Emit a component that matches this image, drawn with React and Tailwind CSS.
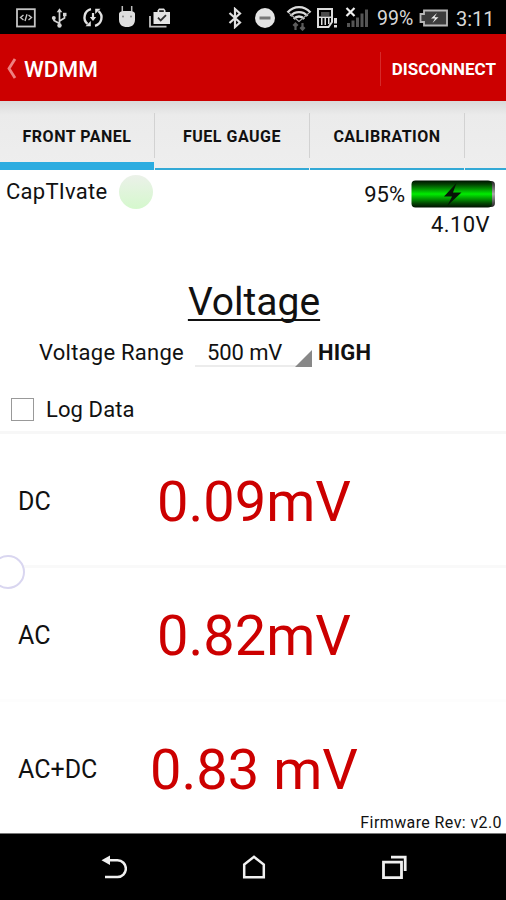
const readings = [
  { label: "DC", value: "0.09mV", line: "border-[#f7f7f7]" },
  { label: "AC", value: "0.82mV", line: "border-[#f9f9f9]" },
  { label: "AC+DC", value: "0.83 mV", line: "border-[#fdfdfd]" },
];

const tabs = ["FRONT PANEL", "FUEL GAUGE", "CALIBRATION"];

// Android status bar, notifications on the left and system icons on the right
function StatusBar() {
  return (
    <div className="flex h-[34px] items-center bg-black pt-px text-[#d8d8d8]">
      <svg className="ml-4" width="20" height="20" viewBox="0 0 20 20" fill="none" stroke="#c4c4c4">
        <rect x="1" y="1.2" width="17.8" height="17.3" strokeWidth="1.8" />
        <path d="M7.5 7 4.5 9.5 7.5 12M12.5 7l3 2.5-3 2.5M11 6.2 9 13" strokeWidth="1.4" />
      </svg>
      <svg className="ml-[15px]" width="17" height="20" viewBox="0 0 17 20" fill="none" stroke="#d4d4d4" strokeWidth="1.7">
        <path d="M8.5 3v14M8.5 15.5 3 12.5v-2M8.5 13l5-3V7" />
        <path d="M5.7 4.2 8.5.3l2.8 3.9z" fill="#d4d4d4" stroke="none" />
        <circle cx="2.8" cy="10" r="2" fill="#d4d4d4" stroke="none" />
        <circle cx="8.5" cy="17.5" r="2.2" fill="#d4d4d4" stroke="none" />
        <path d="M12 4.8h3.5v3.4H12z" fill="#d4d4d4" stroke="none" />
      </svg>
      <svg className="ml-[14px]" width="22" height="21" viewBox="0 0 22 21" fill="none" stroke="#e2e2e2" strokeWidth="2.4">
        <path d="M9 2.200A8.400 8.400 0 0 0 5.500 16.800M13 18.800A8.400 8.400 0 0 0 16.500 4.200" />
        <path d="M3.500 19.300h5.300V14zM18.500 1.700h-5.300V7z" fill="#e2e2e2" stroke="none" />
        <path d="M11 6v5" strokeWidth="2.2" />
        <path d="M7.800 10h6.400L11 14z" fill="#e2e2e2" stroke="none" />
      </svg>
      <svg className="mb-0.5 ml-[14px]" width="18" height="23" viewBox="0 0 18 23">
        <path d="M4.300 1v6M13.700 1v6" stroke="#bdbdbd" strokeWidth="1.5" />
        <path d="M1 9C1 6.500 4 6 9 6s8 .5 8 3v5.500C17 19.500 14 22 9 22s-8-2.500-8-7.500z" fill="#dedede" />
        <circle cx="5" cy="11.500" r="1" fill="#888" />
        <circle cx="13" cy="11.500" r="1" fill="#888" />
      </svg>
      <svg className="ml-[13px]" width="22" height="20" viewBox="0 0 22 20">
        <path d="M1 8v10.700h16.500" fill="none" stroke="#c2c2c2" strokeWidth="1.8" />
        <path d="M4.500 4h4V2.500l1.500-2h5l1.500 2V4H21v12H4.500z" fill="#e4e4e4" />
        <path d="M10.200 4V2.200h4.600V4z" fill="#222" />
        <path d="m9 9.700 2.700 2.800L17 7.200" fill="none" stroke="#333" strokeWidth="1.8" />
      </svg>
      <svg className="ml-[57px]" width="14" height="22" viewBox="0 0 14 22" fill="none" stroke="#e0e0e0" strokeWidth="2.2">
        <path d="M1.500 6 12 15.500 7 20V2l5 4.500L1.500 16" />
      </svg>
      <svg className="ml-3" width="22" height="22" viewBox="0 0 22 22">
        <circle cx="11" cy="11" r="10" fill="#e4e4e4" />
        <rect x="5.5" y="9.5" width="11" height="3" fill="#777" />
      </svg>
      <svg className="ml-[10px]" width="26" height="26" viewBox="0 0 26 26" fill="none">
        <path d="M1.500 7.500C8 .300 18 .300 24.500 7.500M4.500 11C9 5.800 17 5.800 21.500 11M7.800 14c2.800-3.300 7.600-3.300 10.400 0" stroke="#dcdcdc" strokeWidth="2.4" />
        <path d="m3 8 10 8.500L23 8" stroke="#aaa" strokeWidth="1.2" />
        <path d="M9.500 18.500V25M7.300 20.800l2.200-2.300 2.200 2.300M16.500 18v6.500M14.300 22.300l2.200 2.300 2.200-2.300" stroke="#5c5c5c" strokeWidth="2.2" />
      </svg>
      <svg className="ml-1" width="23" height="22" viewBox="0 0 23 22">
        <path d="M2 2h14v13l-3.500 5H2z" fill="none" stroke="#dcdcdc" strokeWidth="2" />
        <path d="M5 5h8.500v4H5z" fill="#4a4a4a" />
        <path d="M3 9.500h12V11H3zM5 11h1.500v7H5zM8.500 11H10v7H8.500zM12 11h1.500v6H12z" fill="#ddd" />
        <path d="M18 11h3v5.500h-3zM18 18h3v2.500h-3z" fill="#dcdcdc" />
      </svg>
      <svg className="ml-[6px]" width="24" height="22" viewBox="0 0 24 22">
        <path d="M2 16h3v4H2zM6.500 13.500h3V20h-3zM11 10.500h3V20h-3zM15.500 6.500h3V20h-3zM20 2.500h3V20h-3z" fill="#555" />
        <path d="m1.500 1 8 8M9.500 1l-8 8" stroke="#f0f0f0" strokeWidth="2.2" />
      </svg>
      <span className="ml-2 mt-[3px] w-[42px] text-[19.5px] leading-none">99%</span>
      <svg width="29" height="18" viewBox="0 0 29 18">
        <path d="M5 1.500h23v15H5V13H1.500V5H5z" fill="#3c3c3c" stroke="#b8b8b8" strokeWidth="1.8" />
        <path d="m18 4-6 5.500h4L13.500 14l6-5.700h-4z" fill="#eee" />
      </svg>
      <span className="ml-2 mt-0.5 text-[20px] leading-none">3:11</span>
    </div>
  );
}

function AppBar() {
  return (
    <header className="flex h-[67px] items-center bg-[#cc0000] pt-[3px] text-white">
      <svg className="ml-[6px]" width="11" height="22" viewBox="0 0 11 22" fill="none">
        <path d="M9 1 3 10.500 9 20" stroke="#ee8080" strokeWidth="2.8" />
      </svg>
      <h1 className="ml-[7px] text-[22.5px] font-medium leading-none">WDMM</h1>
      <button className="ml-auto h-[34px] border-l border-[#d62a2a] pl-[11px] pr-[10px] text-[17px] font-bold leading-none">
        DISCONNECT
      </button>
    </header>
  );
}

function TabBar() {
  return (
    <nav className="flex h-[69px] bg-gradient-to-b from-[#d9d9d9] via-[#ebebeb] via-20% to-[#eeeeee] text-[16px] font-bold tracking-[0.5px] text-[#111]">
      {tabs.map((tab, i) => (
        <div key={tab} className="flex w-[155px] shrink-0 flex-col justify-between">
          <div className="mt-3 flex h-[45px] items-center justify-center whitespace-nowrap border-r border-[#d2d2d2] pt-[2px]">
            {tab}
          </div>
          <div className={i === 0 ? "mr-px h-2 bg-[#2cace0]" : "mr-px h-[2px] bg-[#33a9d6]"} />
        </div>
      ))}
      <div className="flex flex-1 items-end">
        <div className="h-[2px] w-full bg-[#33a9d6]" />
      </div>
    </nav>
  );
}

function Battery() {
  return (
    <svg width="85" height="28" viewBox="0 0 85 28">
      <defs>
        <linearGradient id="cell" x1="0" y1="0" x2="0" y2="1">
          <stop offset="0" stopColor="#001000" />
          <stop offset="0.15" stopColor="#034503" />
          <stop offset="0.5" stopColor="#00ed00" />
          <stop offset="0.85" stopColor="#034503" />
          <stop offset="1" stopColor="#001000" />
        </linearGradient>
        <linearGradient id="cap" x1="0" y1="0" x2="0" y2="1">
          <stop offset="0" stopColor="#222" />
          <stop offset="0.5" stopColor="#aaa" />
          <stop offset="1" stopColor="#222" />
        </linearGradient>
      </defs>
      <rect x="72" y="1" width="12" height="26" rx="4" fill="url(#cap)" />
      <rect x="0.5" y="0.5" width="80.5" height="27" rx="4" fill="url(#cell)" />
      <path d="M45.500 3 33 16.500h8L36.500 25.500 50.500 12.500h-8.500z" fill="#071307" />
    </svg>
  );
}

function NavBar() {
  return (
    <footer className="flex h-[67px] items-center border-t border-[#777] bg-black">
      <svg className="ml-[101px]" width="26" height="24" viewBox="0 0 26 24">
        <path d="M7 5.300h9.500a8.300 8.300 0 0 1 0 16.700H4" fill="none" stroke="#f0f0f0" strokeWidth="2.5" />
        <path d="M.5 5.300 9 .5v9.600z" fill="#f0f0f0" />
      </svg>
      <svg className="ml-[115px]" width="24" height="24" viewBox="0 0 24 24" fill="none" stroke="#f0f0f0" strokeWidth="2.5">
        <path d="M2.200 9.500 12 1.800l9.800 7.700v12.800H2.200z" />
      </svg>
      <svg className="ml-[115px]" width="27" height="25" viewBox="0 0 27 25" fill="none" stroke="#f0f0f0" strokeWidth="2.8">
        <path d="M2.500 7.200h18v15.500h-18z" />
        <path d="M10 2.200h14.200V16" />
      </svg>
    </footer>
  );
}

export default function App() {
  return (
    <div className="flex h-[900px] w-[506px] flex-col overflow-hidden bg-white font-['Roboto',sans-serif] text-[#111]">
      <StatusBar />
      <AppBar />
      <TabBar />

      <main className="relative flex h-[663px] flex-col text-[22px] leading-[26px]">
        <section className="flex h-[105px] items-start justify-between pl-[6px] pr-[10px]">
          <div className="flex items-center pt-[5px]">
            <span className="w-[113px] tracking-[0.25px]">CapTIvate</span>
            <span className="size-[34px] rounded-full bg-gradient-to-b from-[#ebf1e9] to-[#d5f8cd]" />
          </div>
          <div className="flex flex-col items-end pt-[10px]">
            <div className="flex items-center gap-[6px]">
              <span className="mt-0.5">95%</span>
              <Battery />
            </div>
            <span className="mr-[6px] mt-1 tracking-[0.4px]">4.10V</span>
          </div>
        </section>

        <h2 className="flex h-[54px] items-center justify-center pl-[2px] text-[39px] underline decoration-2 underline-offset-[4px] [text-decoration-skip-ink:none]">
          Voltage
        </h2>

        <div className="flex h-[48px] items-center pl-[39px]">
          <span className="w-[156px] tracking-[0.25px]">Voltage Range</span>
          <div className="flex h-[28px] w-[117px] items-end justify-between border-b-2 border-[#ececec] pl-3">
            <span className="-mb-px tracking-[-0.1px]">500 mV</span>
            <svg className="-mb-[2px]" width="17" height="17" viewBox="0 0 17 17">
              <path d="M17 0v17H0z" fill="#888" />
            </svg>
          </div>
          <span className="ml-[6px] font-bold tracking-[0.2px]">HIGH</span>
        </div>

        <label className="flex h-[54px] items-center pl-[11px] pt-[10px]">
          <span className="size-[23px] border-[1.5px] border-[#999]" />
          <span className="ml-3 mt-0.5 tracking-[0.1px]">Log Data</span>
        </label>

        {readings.map((reading) => (
          <div key={reading.label} className={`flex h-[134px] shrink-0 items-center border-t-[3px] pt-[5px] ${reading.line}`}>
            <span className="w-[126px] pl-[18px] text-[25px]">{reading.label}</span>
            <span className="w-[256px] whitespace-nowrap text-center text-[56px] leading-none text-[#cc0000]">{reading.value}</span>
          </div>
        ))}

        <p className="absolute bottom-px right-[4px] text-[16px] leading-[18px] tracking-[0.4px]">Firmware Rev: v2.0</p>
        {/* floating assist handle, half off the left edge */}
        <span className="absolute -left-[9px] top-[385px] size-[34px] rounded-full border-2 border-[#d9d6f0] bg-white" />
      </main>

      <NavBar />
    </div>
  );
}
